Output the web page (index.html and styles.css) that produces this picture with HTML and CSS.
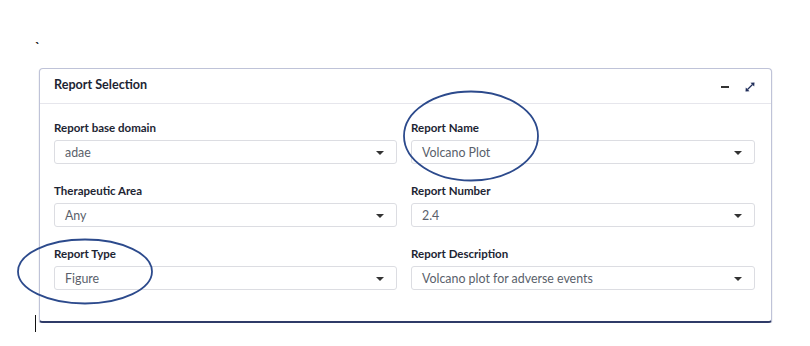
FILE: index.html
```html
<!DOCTYPE html>
<html>
    <head>
        <link rel="stylesheet" href="styles.css">
        <title>Report Selection</title>
    </head>
    <body>
        <div class="tick">`</div>
        <div class="card">
            <div class="card-header">
                <h3 class="card-title">Report Selection</h3>
                <div class="card-tools">
                    <span class="tool-min"></span>
                    <svg class="tool-expand" width="10" height="10" viewBox="0 0 10 10">
                        <path d="M9.5 0.5 L5.5 0.8 L9.2 4.5 Z M0.5 9.5 L4.5 9.2 L0.8 5.5 Z" fill="#1f2d5a"/>
                        <path d="M7.5 2.5 L2.5 7.5" stroke="#1f2d5a" stroke-width="1.3"/>
                    </svg>
                </div>
            </div>
            <div class="card-body">
                <div class="field">
                    <label>Report base domain</label>
                    <div class="select"><span>adae</span><i class="caret"></i></div>
                </div>
                <div class="field">
                    <label>Report Name</label>
                    <div class="select"><span>Volcano Plot</span><i class="caret"></i></div>
                </div>
                <div class="field">
                    <label>Therapeutic Area</label>
                    <div class="select"><span>Any</span><i class="caret"></i></div>
                </div>
                <div class="field">
                    <label>Report Number</label>
                    <div class="select"><span>2.4</span><i class="caret"></i></div>
                </div>
                <div class="field">
                    <label>Report Type</label>
                    <div class="select"><span>Figure</span><i class="caret"></i></div>
                </div>
                <div class="field">
                    <label>Report Description</label>
                    <div class="select"><span>Volcano plot for adverse events</span><i class="caret"></i></div>
                </div>
            </div>
        </div>
        <div class="cursor"></div>
        <svg class="marks" width="810" height="346">
            <ellipse cx="471" cy="136" rx="67" ry="44.5" fill="none" stroke="#2c4a8c" stroke-width="1.8"/>
            <ellipse cx="85" cy="271.5" rx="67" ry="32" fill="none" stroke="#2c4a8c" stroke-width="1.8"/>
        </svg>
    </body>
</html>
```

FILE: styles.css
```css
body {
    margin: 0;
    background-color: #ffffff;
    font-family: "Lato", "Open Sans", sans-serif;
    color: #222;
}
.tick {
    height: 68px;
    padding-left: 35px;
    font-size: 13px;
    font-weight: bold;
    line-height: 12px;
    box-sizing: border-box;
    padding-top: 41px;
}
.card {
    margin-left: 39px;
    width: 733px;
    height: 255px;
    box-sizing: border-box;
    border: 1px solid #bfc3d8;
    border-bottom: 2px solid #2f3b68;
    border-radius: 4px;
    box-shadow: 0 1px 1px rgba(47, 59, 104, 0.5);
    background: #fff;
}
.card-header {
    height: 35px;
    box-sizing: border-box;
    border-bottom: 1px solid #e6e6ec;
    display: flex;
    align-items: center;
    justify-content: space-between;
    padding: 0 16px 3px 14px;
}
.card-title {
    margin: 0;
    font-size: 12.6px;
    font-weight: bold;
    color: #1d2533;
}
.card-tools {
    display: flex;
    align-items: center;
    gap: 16px;
    padding-top: 5px;
}
.tool-min {
    width: 8px;
    height: 1.5px;
    background: #333;
}
.card-body {
    display: grid;
    grid-template-columns: 343px 344px;
    column-gap: 14px;
    row-gap: 18px;
    padding: 15px 16px 0 14px;
}
.field {
    display: flex;
    flex-direction: column;
    gap: 4px;
}
label {
    font-size: 11.5px;
    font-weight: bold;
    line-height: 17px;
    color: #1d2533;
}
.select {
    height: 24px;
    box-sizing: border-box;
    border: 1px solid #dcdde2;
    border-radius: 3px;
    display: flex;
    align-items: center;
    justify-content: space-between;
    padding: 1px 12px 0 10px;
    font-size: 12.4px;
    color: #5a5f6b;
}
.caret {
    width: 0;
    height: 0;
    border-left: 4px solid transparent;
    border-right: 4px solid transparent;
    border-top: 4px solid #333;
}
.cursor {
    position: absolute;
    left: 35px;
    top: 315px;
    width: 1px;
    height: 17px;
    background: #111;
}
.marks {
    position: absolute;
    left: 0;
    top: 0;
    pointer-events: none;
}
```
